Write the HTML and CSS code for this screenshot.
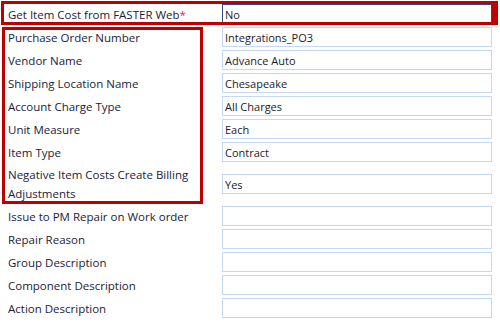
FILE: index.html
```html
<!DOCTYPE html>
<html>
<head>
<meta charset="utf-8">
<link rel="stylesheet" href="styles.css">
</head>
<body>
<div class="sheet">
  <form class="form">
    <label class="label">Get Item Cost from FASTER Web<span class="req">*</span></label>
    <input class="field field-focus" type="text" value="No" readonly>

    <label class="label">Purchase Order Number</label>
    <input class="field" type="text" value="Integrations_PO3" readonly>

    <label class="label">Vendor Name</label>
    <input class="field" type="text" value="Advance Auto" readonly>

    <label class="label">Shipping Location Name</label>
    <input class="field" type="text" value="Chesapeake" readonly>

    <label class="label">Account Charge Type</label>
    <input class="field" type="text" value="All Charges" readonly>

    <label class="label">Unit Measure</label>
    <input class="field" type="text" value="Each" readonly>

    <label class="label">Item Type</label>
    <input class="field" type="text" value="Contract" readonly>

    <label class="label">Negative Item Costs Create Billing Adjustments</label>
    <input class="field" type="text" value="Yes" readonly>

    <label class="label">Issue to PM Repair on Work order</label>
    <input class="field" type="text" value="" readonly>

    <label class="label">Repair Reason</label>
    <input class="field" type="text" value="" readonly>

    <label class="label">Group Description</label>
    <input class="field" type="text" value="" readonly>

    <label class="label">Component Description</label>
    <input class="field" type="text" value="" readonly>

    <label class="label">Action Description</label>
    <input class="field" type="text" value="" readonly>
  </form>
  <div class="mark mark-top"></div>
  <div class="mark mark-group"></div>
</div>
</body>
</html>
```

FILE: styles.css
```css
html, body {
  margin: 0;
  padding: 0;
  background: #ffffff;
}

.sheet {
  position: relative;
  width: 500px;
  height: 326px;
  overflow: hidden;
}

.form {
  display: grid;
  grid-template-columns: 222px 270px;
  row-gap: 3px;
  padding-top: 4px;
  margin: 0;
}

.label {
  align-self: center;
  padding: 0 14px 0 8px;
  font-family: "Open Sans", "Noto Sans", sans-serif;
  font-size: 11.5px;
  line-height: 19px;
  color: #1b1b3a;
}

.req {
  color: #e3245a;
}

.field {
  box-sizing: border-box;
  width: 270px;
  height: 20px;
  margin: 0;
  padding: 0 2px;
  border: 1px solid #c4d8f3;
  background: #ffffff;
  font-family: "Open Sans", "Noto Sans", sans-serif;
  font-size: 11px;
  color: #1b1b2b;
  outline: none;
  align-self: center;
}

.field-focus {
  border-color: #2c4a86;
}

.mark {
  position: absolute;
  box-sizing: border-box;
  border: 3px solid #c00000;
  pointer-events: none;
}

.mark-top {
  left: 1px;
  top: 1px;
  width: 497px;
  height: 24px;
  border-right-width: 6px;
}

.mark-group {
  left: 2px;
  top: 27px;
  width: 201px;
  height: 177px;
}
```
